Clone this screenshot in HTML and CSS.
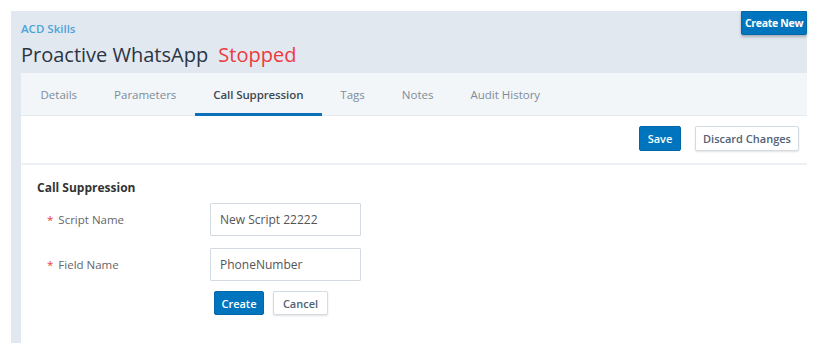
FILE: index.html
```html
<!DOCTYPE html>
<html lang="en">
<head>
    <meta charset="UTF-8">
    <meta name="viewport" content="width=device-width, initial-scale=1.0">
    <title>Proactive WhatsApp - Call Suppression</title>
    <link rel="stylesheet" href="styles.css">
</head>
<body>

    <div class="frame">
        <header class="page-head">
            <a class="crumb" href="#">ACD Skills</a>
            <h1 class="title">Proactive WhatsApp <span class="status">Stopped</span></h1>
            <button class="btn btn-primary create-new">Create New</button>
        </header>

        <div class="panel">
            <nav class="tabs">
                <a class="tab" href="#">Details</a>
                <a class="tab" href="#">Parameters</a>
                <a class="tab active" href="#">Call Suppression</a>
                <a class="tab" href="#">Tags</a>
                <a class="tab" href="#">Notes</a>
                <a class="tab" href="#">Audit History</a>
            </nav>

            <div class="toolbar">
                <button class="btn btn-primary btn-save">Save</button>
                <button class="btn btn-default btn-discard">Discard Changes</button>
            </div>

            <section class="suppression">
                <h2>Call Suppression</h2>

                <div class="form-row">
                    <label class="field-label"><span class="req">*</span>Script Name</label>
                    <input class="field-input" type="text" value="New Script 22222">
                </div>

                <div class="form-row">
                    <label class="field-label"><span class="req">*</span>Field Name</label>
                    <input class="field-input" type="text" value="PhoneNumber">
                </div>

                <div class="form-actions">
                    <button class="btn btn-primary btn-small">Create</button>
                    <button class="btn btn-default btn-small btn-cancel">Cancel</button>
                </div>
            </section>
        </div>
    </div>

</body>
</html>
```

FILE: styles.css
```css
body {
    margin: 0;
    background-color: #fff;
    font-family: "Open Sans", Arial, sans-serif;
    color: #555;
}
.frame {
    position: relative;
    margin: 11px 0 0 11px;
    width: 796px;
    height: 332px;
    background-color: #e1e8f0;
    display: flex;
    flex-direction: column;
}
.page-head {
    height: 62px;
    padding: 10px 0 0 10px;
    box-sizing: border-box;
}
.crumb {
    display: block;
    font-size: 11.5px;
    font-weight: 600;
    line-height: 16px;
    color: #4ba3d9;
    text-decoration: none;
}
.title {
    margin: 4px 0 0;
    font-size: 20px;
    font-weight: 400;
    line-height: 28px;
    color: #2b3544;
}
.status {
    margin-left: 5px;
    color: #ee3a3f;
}
.btn {
    font-family: inherit;
    font-size: 11px;
    font-weight: 600;
    border-radius: 2px;
    cursor: pointer;
    padding: 0;
    white-space: nowrap;
}
.btn-primary {
    background-color: #0075bd;
    border: 1px solid #0068a8;
    color: #fff;
}
.btn-default {
    background-color: #fff;
    border: 1px solid #d3dbe3;
    color: #4f6276;
    box-shadow: 0 1px 2px rgba(0, 0, 0, 0.12);
}
.create-new {
    position: absolute;
    top: 0;
    right: 0;
    width: 66px;
    height: 24px;
    font-size: 10.5px;
    font-weight: 700;
    letter-spacing: -0.3px;
    border-radius: 0 0 2px 2px;
    box-shadow: 0 2px 3px rgba(0, 0, 0, 0.25);
}
.panel {
    flex: 1;
    margin-left: 10px;
    background-color: #fff;
    display: flex;
    flex-direction: column;
}
.tabs {
    display: flex;
    height: 42px;
    padding-left: 1px;
    background-color: #f2f6f9;
    border-bottom: 1px solid #e4eaf0;
}
.tab {
    position: relative;
    padding: 1px 18.5px 0;
    line-height: 41px;
    font-size: 11.5px;
    color: #7e8c99;
    text-decoration: none;
}
.tab.active {
    color: #3e4852;
    font-weight: 600;
    letter-spacing: -0.1px;
}
.tab.active::after {
    content: "";
    position: absolute;
    left: 0;
    right: 0;
    bottom: -1px;
    height: 3px;
    background-color: #0a70b9;
}
.toolbar {
    display: flex;
    justify-content: flex-end;
    gap: 14px;
    height: 49px;
    padding: 10px 8px 0 0;
    box-sizing: border-box;
    border-bottom: 2px solid #edf1f5;
}
.btn-save {
    width: 42px;
    height: 25px;
}
.btn-discard {
    width: 104px;
    height: 25px;
}
.suppression {
    padding: 14px 0 0 16px;
}
.suppression h2 {
    margin: 0 0 6px;
    font-size: 12px;
    font-weight: 700;
    line-height: 18px;
    color: #333;
}
.form-row {
    display: flex;
    align-items: center;
    margin-bottom: 12px;
}
.field-label {
    width: 173px;
    padding-left: 10px;
    box-sizing: border-box;
    font-size: 11.5px;
    color: #666;
}
.req {
    color: #e8383d;
    margin-right: 5px;
}
.field-input {
    width: 151px;
    height: 33px;
    box-sizing: border-box;
    padding: 0 9px;
    border: 1px solid #d3dae1;
    border-radius: 1px;
    font-family: inherit;
    font-size: 12px;
    color: #555;
}
.form-actions {
    display: flex;
    gap: 9px;
    margin: -2px 0 0 177px;
}
.btn-small {
    width: 50px;
    height: 24px;
}
.btn-cancel {
    width: 55px;
}
```
